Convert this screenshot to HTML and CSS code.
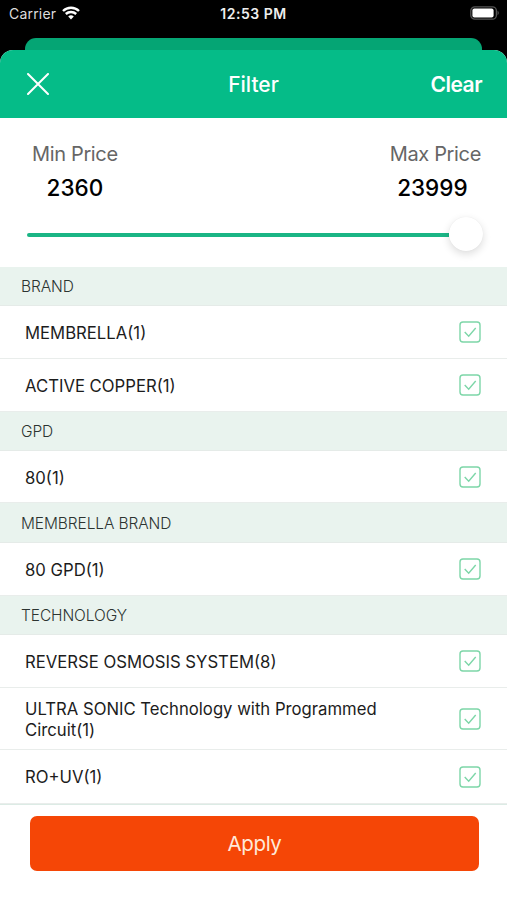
FILE: index.html
```
<!DOCTYPE html>
<html lang="en">

<head>
    <meta charset="utf-8">
    <title>Filter</title>
    <link rel="stylesheet" href="styles.css">
</head>

<body>
    <!-- Shared checkbox icon -->
    <svg class="defs" aria-hidden="true">
        <symbol id="check" viewBox="0 0 22 22">
            <rect x="1" y="1" width="20" height="20" rx="3" />
            <path d="M5.7 11 L9.7 15.2 L16.7 7" />
        </symbol>
    </svg>

    <div class="status-bar">
        <div class="carrier">
            <span>Carrier</span>
            <svg class="wifi" viewBox="0 0 18 14">
                <path d="M1 5 A11.5 11.5 0 0 1 17 5" />
                <path d="M3.8 8 A7.6 7.6 0 0 1 14.2 8" />
                <path class="dot" d="M9 13.4 L6.2 10.5 A4 4 0 0 1 11.8 10.5 Z" />
            </svg>
        </div>
        <div class="time">12:53 PM</div>
        <div class="status-right">
            <svg class="battery" viewBox="0 0 30 14">
                <rect class="shell" x="0.8" y="0.8" width="25.6" height="12.4" rx="4" />
                <rect class="level" x="2.4" y="2.4" width="21.2" height="9.2" rx="2" />
                <path class="cap" d="M27.6 4.6 Q29.8 7 27.6 9.4 Z" />
            </svg>
        </div>
    </div>

    <div class="back-card"></div>

    <div class="sheet">
        <div class="header">
            <svg class="close" viewBox="0 0 22 22">
                <path d="M1 1 L21 21 M21 1 L1 21" />
            </svg>
            <h1>Filter</h1>
            <span class="clear">Clear</span>
        </div>

        <div class="price">
            <div class="price-row">
                <div class="price-item">
                    <span class="price-label">Min Price</span>
                    <span class="price-value">2360</span>
                </div>
                <div class="price-item max">
                    <span class="price-label">Max Price</span>
                    <span class="price-value">23999</span>
                </div>
            </div>
            <div class="slider">
                <div class="track"></div>
                <div class="thumb"></div>
            </div>
        </div>

        <div class="list">
            <h2>BRAND</h2>
            <div class="option"><span>MEMBRELLA(1)</span><svg class="check"><use href="#check" /></svg></div>
            <div class="option"><span>ACTIVE COPPER(1)</span><svg class="check"><use href="#check" /></svg></div>

            <h2>GPD</h2>
            <div class="option short"><span>80(1)</span><svg class="check"><use href="#check" /></svg></div>

            <h2 class="tall">MEMBRELLA BRAND</h2>
            <div class="option"><span>80 GPD(1)</span><svg class="check"><use href="#check" /></svg></div>

            <h2>TECHNOLOGY</h2>
            <div class="option"><span>REVERSE OSMOSIS SYSTEM(8)</span><svg class="check"><use href="#check" /></svg></div>
            <div class="option double"><span>ULTRA SONIC Technology with Programmed Circuit(1)</span><svg class="check"><use href="#check" /></svg></div>
            <div class="option last"><span>RO+UV(1)</span><svg class="check"><use href="#check" /></svg></div>
        </div>

        <div class="footer">
            <button>Apply</button>
        </div>
    </div>
</body>

</html>
```
FILE: styles.css
```
* {
    box-sizing: border-box;
}

body {
    margin: 0;
    height: 900px;
    background-color: #000;
    font-family: Inter, "Liberation Sans", sans-serif;
    display: flex;
    flex-direction: column;
    overflow: hidden;
}

.defs {
    position: absolute;
    width: 0;
    height: 0;
}

/* Status bar */
.status-bar {
    height: 38px;
    padding: 0 7px 10px 9px;
    display: grid;
    grid-template-columns: 1fr auto 1fr;
    align-items: center;
    color: #fff;
    font-size: 14px;
}

.carrier {
    display: flex;
    align-items: center;
    gap: 6px;
    margin-top: -1px;
    color: #ddd;
    letter-spacing: 0.2px;
}

.wifi {
    width: 18px;
    height: 14px;
    margin-top: -1px;
    fill: none;
    stroke: #fff;
    stroke-width: 2.4;
}

.wifi .dot {
    fill: #fff;
    stroke: none;
}

.time {
    margin: -2px 2px 0 0;
    font-weight: 600;
    letter-spacing: 0.5px;
    color: #eee;
}

.status-right {
    display: flex;
    justify-content: flex-end;
}

.battery {
    width: 30px;
    height: 14px;
    margin-top: -2px;
}

.battery .shell {
    fill: none;
    stroke: #555;
    stroke-width: 1.3;
}

.battery .level {
    fill: #fff;
}

.battery .cap {
    fill: #666;
}

/* Card peeking out behind the sheet */
.back-card {
    height: 12px;
    margin: 0 25px;
    background-color: #05a574;
    border-radius: 11px 11px 0 0;
}

.sheet {
    flex: 1;
    background-color: #fff;
    border-radius: 13px 13px 0 0;
    overflow: hidden;
}

.header {
    height: 68px;
    padding: 0 25px 0 27px;
    background-color: #05bc88;
    color: #fff;
    display: grid;
    grid-template-columns: 1fr auto 1fr;
    align-items: center;
}

.close {
    width: 22px;
    height: 22px;
    fill: none;
    stroke: #fff;
    stroke-width: 2;
    stroke-linecap: round;
}

.header h1 {
    margin: 0 2px 0 0;
    font-size: 21px;
    font-weight: 500;
}

.clear {
    justify-self: end;
    font-size: 21px;
    font-weight: 600;
    letter-spacing: -0.5px;
}

/* Price range */
.price {
    height: 149px;
    padding: 23px 24px 0 27px;
}

.price-row {
    display: flex;
    justify-content: space-between;
    padding: 0 2px 0 5px;
}

.price-item {
    display: flex;
    flex-direction: column;
    align-items: center;
}

.price-label {
    font-size: 20px;
    line-height: 26px;
    letter-spacing: -0.35px;
    color: #666;
}

.price-value {
    margin-top: 8px;
    font-size: 22.5px;
    line-height: 26px;
    font-weight: 500;
    color: #000;
}

.price-item.max .price-value {
    margin-right: 6px;
}

.slider {
    height: 34px;
    margin-top: 16px;
    display: flex;
    align-items: center;
}

.track {
    flex: 1;
    height: 4px;
    margin-top: 2px;
    border-radius: 2px 0 0 2px;
    background-color: #1ab585;
}

.thumb {
    width: 34px;
    height: 34px;
    border-radius: 50%;
    background-color: #fff;
    box-shadow: 0 3px 8px rgba(0, 0, 0, 0.14), 0 0 1px rgba(0, 0, 0, 0.08);
}

/* Filter options */
.list h2 {
    margin: 0;
    height: 39px;
    padding-left: 21px;
    background-color: #e9f3ee;
    border-bottom: 1px solid #e5ebe8;
    color: #2c3431;
    font-size: 15.5px;
    font-weight: 300;
    letter-spacing: -0.1px;
    line-height: 40px;
}

.list h2.tall {
    height: 40px;
    line-height: 42px;
}

.option {
    height: 53px;
    padding: 0 26px 0 25px;
    border-bottom: 1px solid #e9edeb;
    display: flex;
    align-items: center;
    justify-content: space-between;
    color: #1c1c1c;
    font-size: 16.7px;
    line-height: 21px;
}

.option.short {
    height: 52px;
    padding-top: 1px;
}

.option.double {
    height: 62px;
}

.option.last {
    height: 54px;
}

.option span {
    width: 370px;
    padding-top: 2px;
}

.check {
    width: 22px;
    height: 22px;
    fill: none;
    stroke: #7dd6a8;
    stroke-width: 1.4;
}

.footer {
    border-top: 1px solid #dcebe5;
    padding: 11px 28px 0 30px;
}

.footer button {
    display: block;
    width: 100%;
    height: 55px;
    border: none;
    border-radius: 7px;
    background-color: #f54606;
    color: #ffe9d9;
    font-family: inherit;
    font-size: 20.5px;
    letter-spacing: -0.4px;
}
```
